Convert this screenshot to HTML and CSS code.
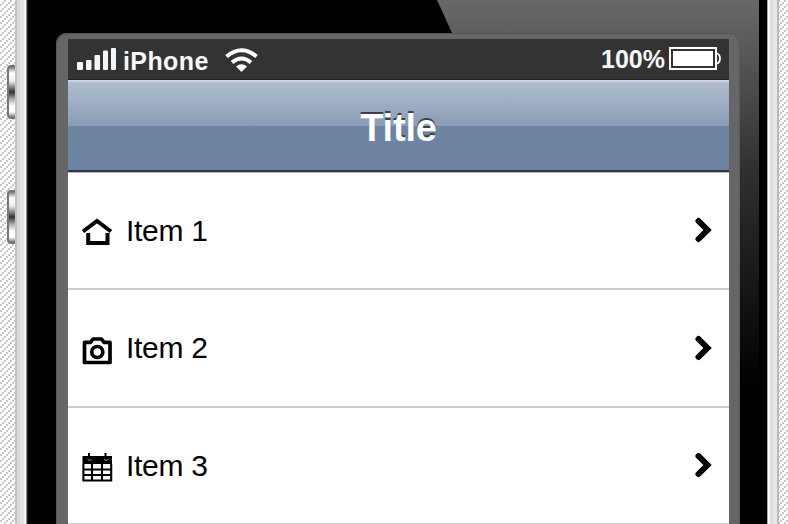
FILE: index.html
```
<!DOCTYPE html>
<html lang="en">
<head>
<meta charset="utf-8">
<title>Title</title>
<link rel="stylesheet" href="styles.css">
</head>
<body>
<svg class="hatch" width="788" height="524" aria-hidden="true">
  <defs><pattern id="hatch" width="6" height="6" patternUnits="userSpaceOnUse">
    <path d="M4 0h2v2h-2zM2 2h2v2h-2zM0 4h2v2h-2z" fill="#c8c8c8"/>
  </pattern></defs>
  <rect width="788" height="524" fill="url(#hatch)"/>
</svg>
<i class="side-button up"></i>
<i class="side-button down"></i>
<div class="phone">
  <div class="glass">
    <div class="glare"></div>
    <div class="frame">
      <div class="screen">
        <div class="status">
          <svg class="signal" width="42" height="24" viewBox="0 0 42 24" fill="#f4f4f4"><rect x="1" y="16" width="6" height="8" rx="1"/><rect x="10" y="14" width="5.500" height="10" rx="1"/><rect x="18.500" y="9" width="5.500" height="15" rx="1"/><rect x="27" y="4.500" width="5" height="19.500" rx="1"/><rect x="35" y="2" width="5" height="22" rx="1"/></svg>
          <span class="carrier">iPhone</span>
          <svg class="wifi" width="36" height="26" viewBox="0 0 36 26" fill="none" stroke="#fff" stroke-width="4"><path d="M2.500 9.500Q17.500 -3 32.500 9.500M8 15.500Q17.500 7.500 27 15.500"/><path d="M12 19.500Q17.500 15 23 19.500L17.500 25Z" fill="#fff" stroke="none"/></svg>
          <span class="percent">100%</span>
          <svg class="battery" width="53" height="24" viewBox="0 0 53 24"><rect x="1" y="1" width="46" height="21" fill="none" stroke="#fff" stroke-width="2"/><rect x="4" y="4" width="40" height="15" fill="#fff"/><path d="M47 6q4 1 4 5.500t-4 5.500" fill="none" stroke="#fff" stroke-width="1.800"/></svg>
        </div>
        <header class="titlebar"><h1>Title</h1></header>
        <ul class="list">
          <li>
            <svg class="icon" width="32" height="32" viewBox="0 0 32 32" fill="none" stroke="#000" stroke-width="4"><path d="M2 14.500L16 4L30 14.500"/><path d="M7.200 16V26H26.500V16"/></svg>
            <span>Item 1</span>
            <svg class="chevron" width="20" height="28" viewBox="0 0 20 28"><path d="M5.500 4L14.500 13L5.500 22"/></svg>
          </li>
          <li>
            <svg class="icon" width="32" height="32" viewBox="0 0 32 32" fill="none" stroke="#000" stroke-width="3.700"><path d="M3.500 8.300H9.500L12 5H20.500L23 8.300H29V28.500H3.500Z" stroke-linejoin="round"/><circle cx="16.300" cy="18" r="5.500"/></svg>
            <span>Item 2</span>
            <svg class="chevron" width="20" height="28" viewBox="0 0 20 28"><path d="M5.500 5L14.500 14L5.500 23"/></svg>
          </li>
          <li>
            <svg class="icon" width="32" height="32" viewBox="0 0 32 32"><path d="M1.500 5H31V13H1.500ZM7 2H9V6H7ZM23.500 2H25.500V6H23.500Z"/><path d="M2.400 13V29.500H30.200V13M2 18.500H30.500M2 24H30.500M11 13V30M21 13V30" fill="none" stroke="#000" stroke-width="2.100"/><path d="M6.500 8l2 1.500 2-1M23 8l2 1.500 2-1" fill="none" stroke="#999" stroke-width="1"/></svg>
            <span>Item 3</span>
            <svg class="chevron" width="20" height="28" viewBox="0 0 20 28"><path d="M5.500 5L14.500 14L5.500 23"/></svg>
          </li>
          <li></li>
        </ul>
      </div>
    </div>
  </div>
</div>
</body>
</html>
```
FILE: styles.css
```
* { box-sizing: border-box; }
body {
  margin: 0;
  width: 788px;
  height: 524px;
  overflow: hidden;
  position: relative;
  background: #fff;
  font-family: "Liberation Sans", Arial, sans-serif;
}
svg { display: block; flex: none; }
.hatch { position: absolute; inset: 0; }
.side-button {
  position: absolute;
  left: 7px;
  width: 10px;
  height: 54px;
  border: 2px solid #777;
  border-right: 0;
  border-radius: 4px 0 0 4px;
  background: linear-gradient(#777, #fff 12%, #eee 28%, #333 50%, #aaa 64%, #fff 78%, #fff 90%, #777);
}
.up { top: 65px; }
.down { top: 190px; }
.phone {
  position: relative;
  margin: 0 9px 0 15px;
  height: 524px;
  padding: 0 12px 0 13px;
  background:
    linear-gradient(90deg, #c4c4c4 0 2px, #dadada 2px 5px, #e4e4e4 5px 9px, #f5f5f5 9px 11px, #888 11px 12px, #222 12px 13px) 0 0 / 13px 100% no-repeat,
    linear-gradient(90deg, #aaa 0 1px, #fafafa 1px 3px, #ddd 3px 6px, #e6e6e6 6px 10px, #bbb 10px 12px) 100% 0 / 12px 100% no-repeat;
}
.glass {
  position: relative;
  height: 524px;
  padding: 33px 27px 0 28px;
  background: #000;
}
.glare {
  position: absolute;
  left: 409px;
  right: 8px;
  top: 0;
  height: 400px;
  background: linear-gradient(#696969, #5c5c5c 40px, #484848 100px, #303030 170px, #1c1c1c 260px, #000 390px);
  clip-path: polygon(0 0, 100% 0, 100% 100%, 182px 100%);
}
.frame {
  position: relative;
  height: 491px;
  padding: 6px 11px 0 12px;
  border-radius: 11px 11px 0 0;
  background: #666;
  box-shadow: inset 1px 1px 1px #555, inset -1px 0 1px #5a5a5a;
}
.screen { height: 485px; background: #fff; }
.status {
  height: 41px;
  display: flex;
  align-items: center;
  padding: 0 7px 0 8px;
  background: #333;
  border-bottom: 1px solid #222;
  color: #f8f8f8;
  font-size: 25px;
  font-weight: bold;
}
.signal { margin-top: -3px; }
.carrier { width: 86px; margin-left: 5px; margin-top: 4px; letter-spacing: .4px; }
.wifi { margin-left: 15px; margin-top: 1px; }
.percent { margin-left: auto; margin-right: 4px; margin-top: 1px; }
.titlebar {
  height: 93px;
  border-top: 2px solid #cbd3df;
  border-bottom: 1px solid #bbb;
  box-shadow: inset 0 -2px 0 #2d3642;
  background: linear-gradient(#b1bdce, #899cb5 44px, #6e84a3 44px, #6d83a3);
  display: flex;
  align-items: center;
  justify-content: center;
}
h1 {
  margin: 2px 0 0;
  color: #fff;
  font-size: 38px;
  line-height: 44px;
  letter-spacing: -.2px;
  text-shadow: 0 -2px 0 #38414c;
}
.list { margin: 0; padding: 0; list-style: none; height: 351px; overflow: hidden; }
li {
  height: 117.300px;
  display: flex;
  align-items: center;
  padding: 0 16px 0 13px;
  border-bottom: 2px solid #ccc;
  font-size: 30px;
  color: #000;
}
li .icon { margin-top: 4px; }
li span { margin-left: 13px; margin-top: 1px; letter-spacing: -.3px; }
.chevron { margin-left: auto; }
.chevron path { fill: none; stroke: #000; stroke-width: 6; stroke-linecap: round; }
```
